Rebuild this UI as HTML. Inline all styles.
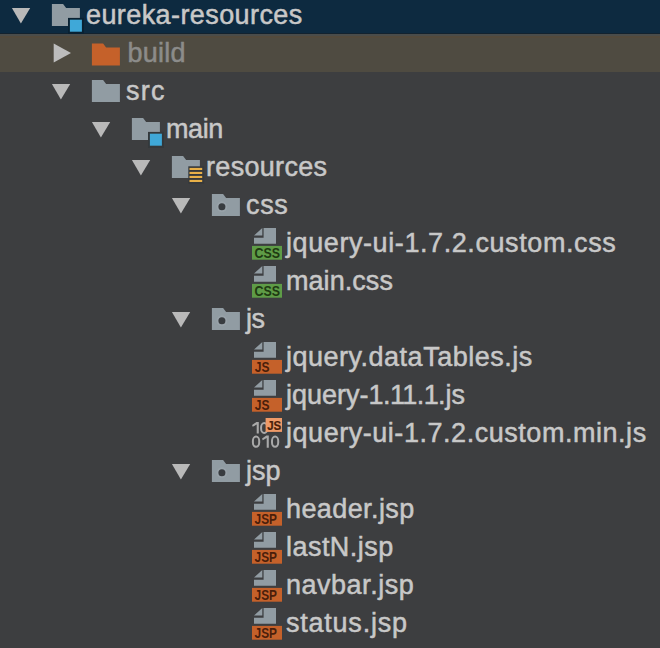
<!DOCTYPE html>
<html><head><meta charset="utf-8"><style>
html,body{margin:0;padding:0;width:660px;height:648px;overflow:hidden;background:#3D3E40}
.band{position:absolute;left:0;width:660px;height:38px}
.t{position:absolute;-webkit-text-stroke:0.5px currentColor;font-family:"Liberation Sans",sans-serif;font-size:27.0px;line-height:38px;white-space:nowrap}
svg{position:absolute;left:0;top:0}
</style></head><body>
<div class="band" style="top:-4.5px;background:#0D2A40"></div>
<div class="band" style="top:33.5px;background:#4F4B41"></div>
<div class="band" style="top:33px;height:1px;background:#13222E"></div>
<div class="band" style="top:34px;height:2px;background:#4A4C4A"></div>
<div class="band" style="top:36px;height:2px;background:#534A3C"></div>
<svg width="660" height="648" viewBox="0 0 660 648">
<path d="M11.9 8H30.2L20.9 23.6Z" fill="#B9B9B9"/>
<g><path d="M51.9 4.1H63.099999999999994L66.1 7.8999999999999995H79.9V25.9H51.9Z" fill="#919CA3"/><rect x="68.0" y="17.9" width="16" height="16" fill="#0A2132"/><rect x="69.9" y="19.7" width="12" height="12" fill="#3FA8D8"/></g>
<path d="M53.7 43.4L71 53L53.7 62.5Z" fill="#BDBDBD"/>
<path d="M91.9 43.6H103.10000000000001L106.10000000000001 47.4H119.9V65.4H91.9Z" fill="#C5612A"/>
<path d="M51.9 84H70.2L60.9 99.6Z" fill="#B9B9B9"/>
<path d="M91.9 80.1H103.10000000000001L106.10000000000001 83.89999999999999H119.9V101.89999999999999H91.9Z" fill="#919CA3"/>
<path d="M91.9 122H110.2L100.9 137.6Z" fill="#B9B9B9"/>
<g><path d="M131.9 118.1H143.1L146.1 121.89999999999999H159.9V139.9H131.9Z" fill="#919CA3"/><rect x="148.0" y="131.9" width="16" height="16" fill="#34383B"/><rect x="149.9" y="133.7" width="12" height="12" fill="#3FA8D8"/></g>
<path d="M131.9 160H150.2L140.9 175.6Z" fill="#B9B9B9"/>
<path d="M171.9 156.1H183.1L186.1 159.9H199.9V177.9H171.9Z" fill="#919CA3"/>
<rect x="188.3" y="166.29999999999998" width="15.8" height="17.5" fill="#36393C"/>
<rect x="189.5" y="167.9" width="12.7" height="2.1" fill="#E8B048"/>
<rect x="189.5" y="171.9" width="12.7" height="2.1" fill="#E8B048"/>
<rect x="189.5" y="175.9" width="12.7" height="2.1" fill="#E8B048"/>
<rect x="189.5" y="179.9" width="12.7" height="2.1" fill="#E8B048"/>
<path d="M171.9 198H190.2L180.9 213.6Z" fill="#B9B9B9"/>
<path d="M211.9 194.1H223.1L226.1 197.9H239.9V215.9H211.9Z" fill="#919CA3"/>
<circle cx="221.9" cy="206.7" r="5.4" fill="#98A2A9"/>
<circle cx="221.9" cy="206.7" r="3.5" fill="#383C40"/>
<path d="M263.6 228.1H276V243.7H254V237.7H263.6Z" fill="#919CA3"/>
<path d="M254 235.5L262.3 228.1V235.5Z" fill="#919CA3"/>
<rect x="252" y="245.9" width="30" height="13.8" fill="#5E9C47"/>
<text transform="translate(254.6 257.6) scale(0.9 1)" font-family="Liberation Sans" font-weight="bold" font-size="13.8" letter-spacing="0" fill="#1E3A12">CSS</text>
<path d="M263.6 266.1H276V281.70000000000005H254V275.70000000000005H263.6Z" fill="#919CA3"/>
<path d="M254 273.5L262.3 266.1V273.5Z" fill="#919CA3"/>
<rect x="252" y="283.9" width="30" height="13.8" fill="#5E9C47"/>
<text transform="translate(254.6 295.6) scale(0.9 1)" font-family="Liberation Sans" font-weight="bold" font-size="13.8" letter-spacing="0" fill="#1E3A12">CSS</text>
<path d="M171.9 312H190.2L180.9 327.6Z" fill="#B9B9B9"/>
<path d="M211.9 308.1H223.1L226.1 311.90000000000003H239.9V329.90000000000003H211.9Z" fill="#919CA3"/>
<circle cx="221.9" cy="320.70000000000005" r="5.4" fill="#98A2A9"/>
<circle cx="221.9" cy="320.70000000000005" r="3.5" fill="#383C40"/>
<path d="M263.6 342.1H276V357.70000000000005H254V351.70000000000005H263.6Z" fill="#919CA3"/>
<path d="M254 349.5L262.3 342.1V349.5Z" fill="#919CA3"/>
<rect x="252" y="359.9" width="30" height="13.8" fill="#C5612A"/>
<text transform="translate(254.8 371.7) scale(0.86 1)" font-family="Liberation Sans" font-weight="bold" font-size="14" fill="#4A1E0A">JS</text>
<path d="M263.6 380.1H276V395.70000000000005H254V389.70000000000005H263.6Z" fill="#919CA3"/>
<path d="M254 387.5L262.3 380.1V387.5Z" fill="#919CA3"/>
<rect x="252" y="397.9" width="30" height="13.8" fill="#C5612A"/>
<text transform="translate(254.8 409.7) scale(0.86 1)" font-family="Liberation Sans" font-weight="bold" font-size="14" fill="#4A1E0A">JS</text>
<path d="M258.80 422.10V433.50H256.70V424.60L252.70 426.70L252.10 425.00L256.40 422.10Z" fill="#A9A9A9"/>
<rect x="261.10" y="423.00" width="6.30" height="10.00" rx="3.15" ry="4.20" fill="none" stroke="#A9A9A9" stroke-width="2.0"/>
<rect x="252.90" y="436.60" width="6.30" height="10.20" rx="3.15" ry="4.20" fill="none" stroke="#A9A9A9" stroke-width="2.0"/>
<path d="M268.80 435.60V447.80H266.70V438.10L262.70 440.20L262.10 438.50L266.40 435.60Z" fill="#A9A9A9"/>
<rect x="272.00" y="436.60" width="6.20" height="10.20" rx="3.10" ry="4.20" fill="none" stroke="#A9A9A9" stroke-width="2.0"/>
<rect x="265.6" y="418" width="16.4" height="13.9" fill="#EE9A68"/>
<text transform="translate(267.3 429.8) scale(0.9 1)" x="0" y="0" font-family="Liberation Sans" font-weight="bold" font-size="12.8" letter-spacing="-0.3" fill="#4A1E0A" stroke="#4A1E0A" stroke-width="0.25">JS</text>
<path d="M171.9 464H190.2L180.9 479.6Z" fill="#B9B9B9"/>
<path d="M211.9 460.1H223.1L226.1 463.90000000000003H239.9V481.90000000000003H211.9Z" fill="#919CA3"/>
<circle cx="221.9" cy="472.70000000000005" r="5.4" fill="#98A2A9"/>
<circle cx="221.9" cy="472.70000000000005" r="3.5" fill="#383C40"/>
<path d="M263.6 494.1H276V509.70000000000005H254V503.70000000000005H263.6Z" fill="#919CA3"/>
<path d="M254 501.5L262.3 494.1V501.5Z" fill="#919CA3"/>
<rect x="252" y="511.9" width="30" height="13.8" fill="#C5612A"/>
<text transform="translate(254.6 523.6) scale(0.86 1)" font-family="Liberation Sans" font-weight="bold" font-size="13.8" letter-spacing="0" fill="#4A1E0A">JSP</text>
<path d="M263.6 532.1H276V547.7H254V541.7H263.6Z" fill="#919CA3"/>
<path d="M254 539.5L262.3 532.1V539.5Z" fill="#919CA3"/>
<rect x="252" y="549.9" width="30" height="13.8" fill="#C5612A"/>
<text transform="translate(254.6 561.6) scale(0.86 1)" font-family="Liberation Sans" font-weight="bold" font-size="13.8" letter-spacing="0" fill="#4A1E0A">JSP</text>
<path d="M263.6 570.1H276V585.7H254V579.7H263.6Z" fill="#919CA3"/>
<path d="M254 577.5L262.3 570.1V577.5Z" fill="#919CA3"/>
<rect x="252" y="587.9" width="30" height="13.8" fill="#C5612A"/>
<text transform="translate(254.6 599.6) scale(0.86 1)" font-family="Liberation Sans" font-weight="bold" font-size="13.8" letter-spacing="0" fill="#4A1E0A">JSP</text>
<path d="M263.6 608.1H276V623.7H254V617.7H263.6Z" fill="#919CA3"/>
<path d="M254 615.5L262.3 608.1V615.5Z" fill="#919CA3"/>
<rect x="252" y="625.9" width="30" height="13.8" fill="#C5612A"/>
<text transform="translate(254.6 637.6) scale(0.86 1)" font-family="Liberation Sans" font-weight="bold" font-size="13.8" letter-spacing="0" fill="#4A1E0A">JSP</text>
</svg>
<div class="t" style="left:86px;top:-4.15px;color:#C8C8C8;letter-spacing:0.413px">eureka-resources</div>
<div class="t" style="left:127.5px;top:33.85px;color:#8C8C8A;letter-spacing:0.250px">build</div>
<div class="t" style="left:126px;top:71.85px;color:#C8C8C8;letter-spacing:1.300px">src</div>
<div class="t" style="left:166px;top:109.85px;color:#C8C8C8;letter-spacing:-0.400px">main</div>
<div class="t" style="left:206px;top:147.85px;color:#C8C8C8;letter-spacing:0.312px">resources</div>
<div class="t" style="left:246px;top:185.85px;color:#C8C8C8;letter-spacing:0.650px">css</div>
<div class="t" style="left:286px;top:223.85px;color:#C8C8C8;letter-spacing:0.584px">jquery-ui-1.7.2.custom.css</div>
<div class="t" style="left:286px;top:261.85px;color:#C8C8C8;letter-spacing:0.057px">main.css</div>
<div class="t" style="left:246px;top:299.85px;color:#C8C8C8;letter-spacing:-0.500px">js</div>
<div class="t" style="left:286px;top:337.85px;color:#C8C8C8;letter-spacing:0.505px">jquery.dataTables.js</div>
<div class="t" style="left:286px;top:375.85px;color:#C8C8C8;letter-spacing:0.000px">jquery-<span style="letter-spacing:-0.583px">1.11.1</span>.js</div>
<div class="t" style="left:286px;top:413.85px;color:#C8C8C8;letter-spacing:0.536px">jquery-ui-1.7.2.custom.min.js</div>
<div class="t" style="left:246px;top:451.85px;color:#C8C8C8;letter-spacing:0.000px">jsp</div>
<div class="t" style="left:286px;top:489.85px;color:#C8C8C8;letter-spacing:0.400px">header.jsp</div>
<div class="t" style="left:286px;top:527.85px;color:#C8C8C8;letter-spacing:0.462px">lastN.jsp</div>
<div class="t" style="left:286px;top:565.85px;color:#C8C8C8;letter-spacing:0.511px">navbar.jsp</div>
<div class="t" style="left:286px;top:603.85px;color:#C8C8C8;letter-spacing:0.767px">status.jsp</div>
</body></html>
